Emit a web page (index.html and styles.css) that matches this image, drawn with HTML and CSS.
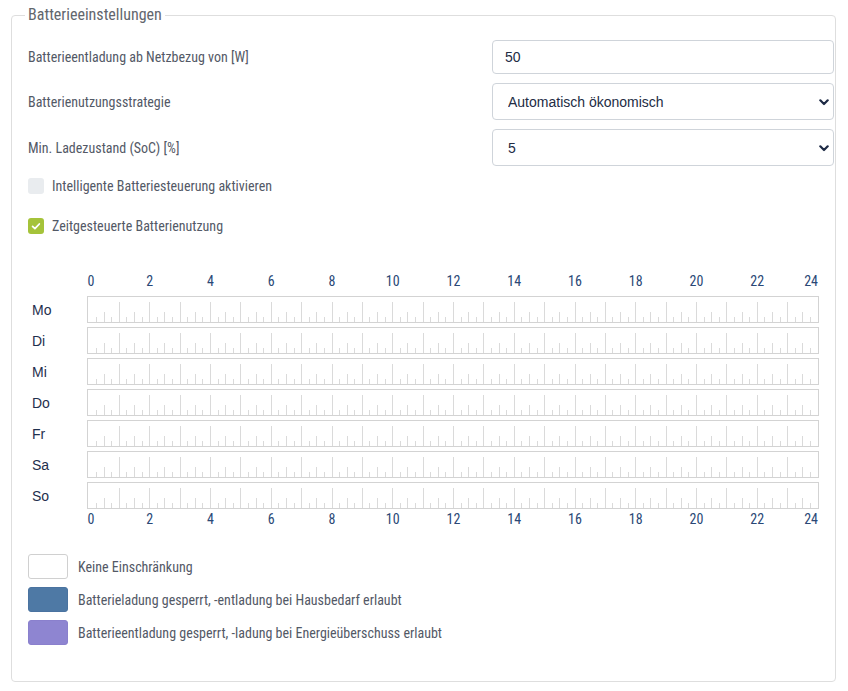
FILE: index.html
```html
<!DOCTYPE html>
<html lang="de">
<head>
<meta charset="utf-8">
<title>Batterieeinstellungen</title>
<link rel="stylesheet" href="styles.css">
</head>
<body>
<svg class="defs" aria-hidden="true">
  <defs>
    <g id="ticks">
      <path class="tick" d="M30.5 5V25M60.5 5V25M91.5 5V25M121.5 5V25M151.5 5V25M182.5 5V25M212.5 5V25M243.5 5V25M273.5 5V25M303.5 5V25M334.5 5V25M364.5 5V25M394.5 5V25M425.5 5V25M455.5 5V25M486.5 5V25M516.5 5V25M546.5 5V25M577.5 5V25M607.5 5V25M637.5 5V25M668.5 5V25M698.5 5V25"/>
      <path class="tick" d="M15.5 15V25M45.5 15V25M75.5 15V25M106.5 15V25M136.5 15V25M167.5 15V25M197.5 15V25M227.5 15V25M258.5 15V25M288.5 15V25M318.5 15V25M349.5 15V25M379.5 15V25M410.5 15V25M440.5 15V25M470.5 15V25M501.5 15V25M531.5 15V25M561.5 15V25M592.5 15V25M622.5 15V25M653.5 15V25M683.5 15V25M713.5 15V25"/>
      <path class="tick" d="M7.5 20V25M22.5 20V25M37.5 20V25M53.5 20V25M68.5 20V25M83.5 20V25M98.5 20V25M113.5 20V25M129.5 20V25M144.5 20V25M159.5 20V25M174.5 20V25M189.5 20V25M205.5 20V25M220.5 20V25M235.5 20V25M250.5 20V25M265.5 20V25M280.5 20V25M296.5 20V25M311.5 20V25M326.5 20V25M341.5 20V25M356.5 20V25M372.5 20V25M387.5 20V25M402.5 20V25M417.5 20V25M432.5 20V25M448.5 20V25M463.5 20V25M478.5 20V25M493.5 20V25M508.5 20V25M523.5 20V25M539.5 20V25M554.5 20V25M569.5 20V25M584.5 20V25M599.5 20V25M615.5 20V25M630.5 20V25M645.5 20V25M660.5 20V25M675.5 20V25M691.5 20V25M706.5 20V25M721.5 20V25"/>
    </g>
  </defs>
</svg>
<div class="page">
  <fieldset class="box">
    <legend class="box-title">Batterieeinstellungen</legend>

    <div class="form-row row-first">
      <label class="lbl" for="f1">Batterieentladung ab Netzbezug von [W]</label>
      <input class="ctrl input" id="f1" type="text" value="50">
    </div>

    <div class="form-row">
      <label class="lbl" for="f2">Batterienutzungsstrategie</label>
      <div class="select-wrap">
        <select class="ctrl sel" id="f2"><option>Automatisch ökonomisch</option></select>
        <svg class="chev" viewBox="0 0 10 7" aria-hidden="true"><path d="M1.3 1.3L5 5l3.7-3.7"/></svg>
      </div>
    </div>

    <div class="form-row">
      <label class="lbl" for="f3">Min. Ladezustand (SoC) [%]</label>
      <div class="select-wrap">
        <select class="ctrl sel" id="f3"><option>5</option></select>
        <svg class="chev" viewBox="0 0 10 7" aria-hidden="true"><path d="M1.3 1.3L5 5l3.7-3.7"/></svg>
      </div>
    </div>

    <div class="check-row check-first">
      <span class="cbox"></span>
      <span class="lbl">Intelligente Batteriesteuerung aktivieren</span>
    </div>
    <div class="check-row check-second">
      <span class="cbox on"><svg viewBox="0 0 16 16" aria-hidden="true"><path d="M4.6 8.4l2.3 2.2 4.4-4.6"/></svg></span>
      <span class="lbl">Zeitgesteuerte Batterienutzung</span>
    </div>

    <div class="timeline">
      <div class="hours hours-top">
        <span>0</span><span>2</span><span>4</span><span>6</span><span>8</span><span>10</span><span>12</span><span>14</span><span>16</span><span>18</span><span>20</span><span>22</span><span>24</span>
      </div>
      <div class="days">
        <div class="day-row"><span class="day">Mo</span><div class="track"><svg class="ticks" viewBox="0 0 729 25"><use href="#ticks"/></svg></div></div>
        <div class="day-row"><span class="day">Di</span><div class="track"><svg class="ticks" viewBox="0 0 729 25"><use href="#ticks"/></svg></div></div>
        <div class="day-row"><span class="day">Mi</span><div class="track"><svg class="ticks" viewBox="0 0 729 25"><use href="#ticks"/></svg></div></div>
        <div class="day-row"><span class="day">Do</span><div class="track"><svg class="ticks" viewBox="0 0 729 25"><use href="#ticks"/></svg></div></div>
        <div class="day-row"><span class="day">Fr</span><div class="track"><svg class="ticks" viewBox="0 0 729 25"><use href="#ticks"/></svg></div></div>
        <div class="day-row"><span class="day">Sa</span><div class="track"><svg class="ticks" viewBox="0 0 729 25"><use href="#ticks"/></svg></div></div>
        <div class="day-row"><span class="day">So</span><div class="track"><svg class="ticks" viewBox="0 0 729 25"><use href="#ticks"/></svg></div></div>
      </div>
      <div class="hours hours-bottom">
        <span>0</span><span>2</span><span>4</span><span>6</span><span>8</span><span>10</span><span>12</span><span>14</span><span>16</span><span>18</span><span>20</span><span>22</span><span>24</span>
      </div>
    </div>

    <div class="legend-list">
      <div class="legend-item"><span class="swatch sw-free"></span><span class="lbl">Keine Einschränkung</span></div>
      <div class="legend-item"><span class="swatch sw-blue"></span><span class="lbl">Batterieladung gesperrt, -entladung bei Hausbedarf erlaubt</span></div>
      <div class="legend-item"><span class="swatch sw-purple"></span><span class="lbl">Batterieentladung gesperrt, -ladung bei Energieüberschuss erlaubt</span></div>
    </div>
  </fieldset>
</div>
</body>
</html>
```

FILE: styles.css
```css
* { box-sizing: border-box; }

html, body {
  margin: 0;
  padding: 0;
  background: #ffffff;
}

body {
  font-family: "Roboto Condensed", "Liberation Sans Narrow", "Arial Narrow", "Roboto", sans-serif;
  font-size: 14px;
  color: #535966;
}

.defs {
  position: absolute;
  width: 0;
  height: 0;
  overflow: hidden;
}

.page {
  padding: 5px 12px 0 11px;
}

.box {
  margin: 0;
  min-width: 0;
  border: 1px solid #dedede;
  border-radius: 4px;
  padding: 15px 1px 36px 16px;
}

.box-title {
  font-size: 16px;
  line-height: 20px;
  color: #62666d;
  padding: 0 3px;
  margin-left: -3px;
}

.lbl {
  line-height: 20px;
  color: #535966;
}

/* form rows */
.form-row {
  display: grid;
  grid-template-columns: 1fr 342px;
  align-items: center;
  margin-top: 9px;
}

.row-first { margin-top: 0; }

.ctrl {
  display: block;
  width: 100%;
  margin: 0;
  border: 1px solid #cfd4da;
  border-radius: 4px;
  background: #ffffff;
  font-family: "Liberation Sans", Arial, sans-serif;
  font-size: 14px;
  color: #222c44;
  outline: none;
}

.input {
  height: 34px;
  padding: 0 12px;
}

.select-wrap {
  position: relative;
}

.sel {
  height: 37px;
  padding: 0 30px 0 15px;
  appearance: none;
  -webkit-appearance: none;
}

.chev {
  position: absolute;
  right: 5px;
  top: 50%;
  width: 10px;
  height: 7px;
  margin-top: -3px;
  pointer-events: none;
}

.chev path {
  fill: none;
  stroke: #1d2a45;
  stroke-width: 2.2;
  stroke-linecap: round;
  stroke-linejoin: round;
}

/* checkbox rows */
.check-row {
  display: flex;
  align-items: center;
  gap: 8px;
  height: 20px;
}

.check-first { margin-top: 10px; }
.check-second { margin-top: 20px; }

.cbox {
  width: 16px;
  height: 16px;
  border-radius: 3px;
  background: #e9ecef;
  flex: none;
  display: flex;
}

.cbox.on { background: #a5c33a; }

.cbox svg { width: 16px; height: 16px; }

.cbox svg path {
  fill: none;
  stroke: #ffffff;
  stroke-width: 1.8;
  stroke-linecap: round;
  stroke-linejoin: round;
}

/* timeline */
.timeline {
  margin-top: 36px;
  display: flex;
  flex-direction: column;
}

.hours {
  margin-left: 59px;
  width: 732px;
  padding: 0 1px 0 2px;
  display: flex;
  height: 18px;
  line-height: 18px;
  font-size: 14px;
  color: #2a4876;
}

.hours span {
  flex: 2 2 0;
  text-align: center;
  white-space: nowrap;
}

.hours span:first-child {
  flex: 1 1 0;
  text-align: left;
  text-indent: -1.5px;
}

.hours span:last-child {
  flex: 1 1 0;
  text-align: right;
}

.hours-top { margin-bottom: 6px; }
.hours-bottom { margin-top: 1px; }

.days {
  display: flex;
  flex-direction: column;
  gap: 4px;
}

.day-row {
  display: flex;
  align-items: center;
}

.day {
  width: 59px;
  padding-left: 4px;
  font-family: "Liberation Sans", Arial, sans-serif;
  font-size: 14px;
  color: #1f2f4d;
}

.track {
  width: 732px;
  height: 27px;
  border: 1px solid #d3d3d3;
  padding-left: 1px;
  background: #ffffff;
}

.ticks {
  display: block;
  width: 729px;
  height: 25px;
}

.tick {
  fill: none;
  stroke: #dadada;
  stroke-width: 1;
  shape-rendering: crispEdges;
}

/* legend */
.legend-list {
  margin-top: 26px;
  display: flex;
  flex-direction: column;
  gap: 8px;
}

.legend-item {
  display: flex;
  align-items: center;
  gap: 10px;
}

.swatch {
  width: 40px;
  height: 25px;
  border-radius: 3px;
  border: 1px solid #d0d0d0;
  flex: none;
}

.sw-free { background: #ffffff; }
.sw-blue { background: #4e79a5; border-color: #4a73a0; }
.sw-purple { background: #8e85d1; border-color: #8a80cd; }
```
